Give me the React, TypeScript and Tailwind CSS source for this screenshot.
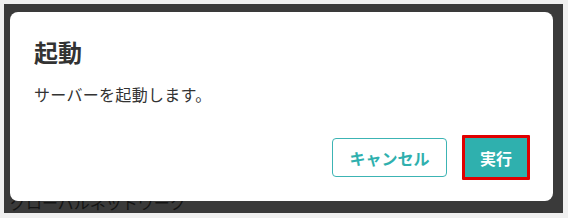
import React from "react";

export default function App() {
  const font = { fontFamily: '"Noto Sans CJK JP", "Noto Sans", sans-serif' };
  return (
    <div className="w-[568px] h-[218px] bg-[#f0f0f0] pt-[4px] pl-[4px]" style={font}>
      <div className="relative w-[559px] h-[209px] bg-[#3a3a3a] overflow-hidden flex flex-col justify-end">
        <div className="pl-[6px] pb-[1px] text-[16px] leading-[20px] text-[#141414]">
          グローバルネットワーク
        </div>
        <div className="absolute left-[6px] top-[8px] w-[543px] h-[189px] bg-white rounded-[8px] pt-[24px] pl-[24px] pr-[23px] pb-[21px] flex flex-col">
          <h2 className="text-[24px] leading-[32px] font-bold text-[#333]">起動</h2>
          <p className="mt-[14px] text-[16px] leading-[24px] text-[#333] tracking-[0.3px]">サーバーを起動します。</p>
          <div className="mt-auto flex justify-end items-center gap-[15px]">
            <button className="w-[115px] h-[39px] border border-[#3cb4b4] rounded-[4px] text-[16px] font-bold text-[#2fb0ae] bg-white">
              キャンセル
            </button>
            <div className="border-[3px] border-[#e00000] rounded-[1px]">
              <button className="block w-[62px] h-[39px] bg-[#2fb0ae] text-[16px] font-bold text-white">
                実行
              </button>
            </div>
          </div>
        </div>
      </div>
    </div>
  );
}
